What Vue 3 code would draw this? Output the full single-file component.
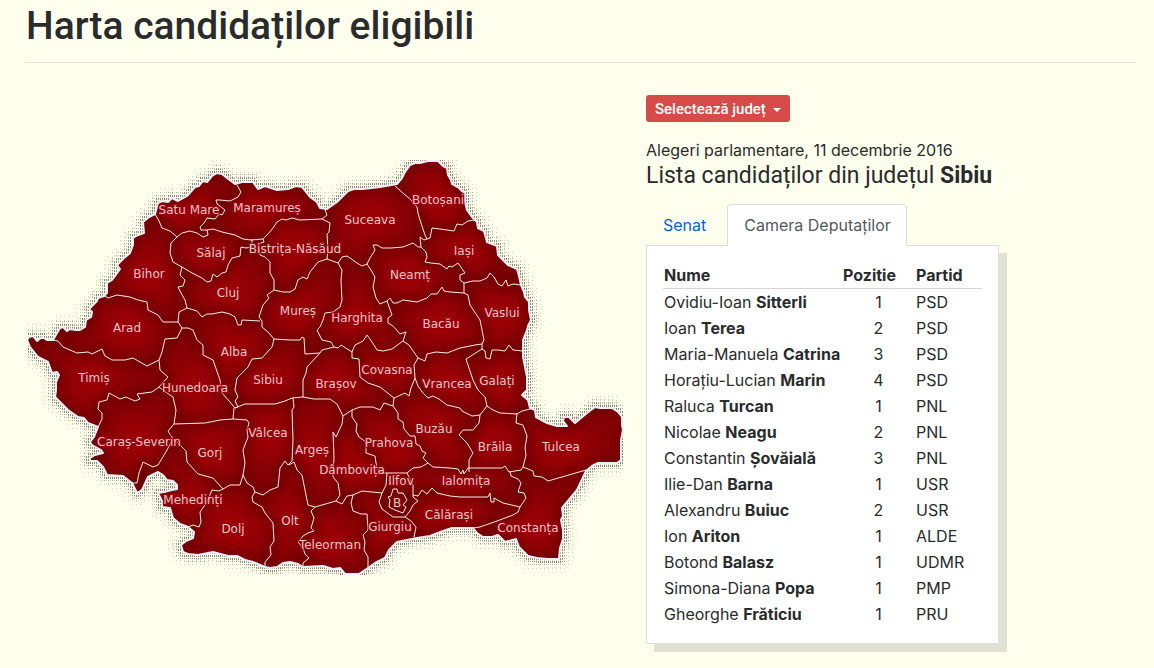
<script setup>
import { ref, computed } from 'vue'

const selected = ref('Sibiu')
const tab = ref('camera')

// candidates for each chamber
const lists = {
  senat: [],
  camera: [
    { first: 'Ovidiu-Ioan', last: 'Sitterli', pos: 1, party: 'PSD' },
    { first: 'Ioan', last: 'Terea', pos: 2, party: 'PSD' },
    { first: 'Maria-Manuela', last: 'Catrina', pos: 3, party: 'PSD' },
    { first: 'Horațiu-Lucian', last: 'Marin', pos: 4, party: 'PSD' },
    { first: 'Raluca', last: 'Turcan', pos: 1, party: 'PNL' },
    { first: 'Nicolae', last: 'Neagu', pos: 2, party: 'PNL' },
    { first: 'Constantin', last: 'Șovăială', pos: 3, party: 'PNL' },
    { first: 'Ilie-Dan', last: 'Barna', pos: 1, party: 'USR' },
    { first: 'Alexandru', last: 'Buiuc', pos: 2, party: 'USR' },
    { first: 'Ion', last: 'Ariton', pos: 1, party: 'ALDE' },
    { first: 'Botond', last: 'Balasz', pos: 1, party: 'UDMR' },
    { first: 'Simona-Diana', last: 'Popa', pos: 1, party: 'PMP' },
    { first: 'Gheorghe', last: 'Frăticiu', pos: 1, party: 'PRU' }
  ]
}
const candidates = computed(() => lists[tab.value])

// label position of each county on the map
const counties = [
  { name: 'Satu Mare', x: 189, y: 214 },
  { name: 'Maramureș', x: 267, y: 212 },
  { name: 'Suceava', x: 370, y: 224 },
  { name: 'Botoșani', x: 438, y: 204 },
  { name: 'Sălaj', x: 211, y: 257 },
  { name: 'Bistrița-Năsăud', x: 295, y: 253 },
  { name: 'Iași', x: 464, y: 255 },
  { name: 'Neamț', x: 410, y: 279 },
  { name: 'Bihor', x: 149, y: 278 },
  { name: 'Cluj', x: 228, y: 297 },
  { name: 'Mureș', x: 298, y: 315 },
  { name: 'Harghita', x: 357, y: 322 },
  { name: 'Bacău', x: 441, y: 328 },
  { name: 'Vaslui', x: 502, y: 317 },
  { name: 'Arad', x: 127, y: 332 },
  { name: 'Alba', x: 234, y: 356 },
  { name: 'Timiș', x: 94, y: 382 },
  { name: 'Hunedoara', x: 195, y: 392 },
  { name: 'Sibiu', x: 268, y: 384 },
  { name: 'Brașov', x: 336, y: 388 },
  { name: 'Covasna', x: 387, y: 374 },
  { name: 'Vrancea', x: 447, y: 388 },
  { name: 'Galați', x: 497, y: 385 },
  { name: 'Caraș-Severin', x: 139, y: 446 },
  { name: 'Gorj', x: 210, y: 457 },
  { name: 'Vâlcea', x: 268, y: 437 },
  { name: 'Argeș', x: 312, y: 454 },
  { name: 'Prahova', x: 389, y: 447 },
  { name: 'Buzău', x: 434, y: 433 },
  { name: 'Brăila', x: 495, y: 451 },
  { name: 'Tulcea', x: 561, y: 451 },
  { name: 'Mehedinți', x: 193, y: 504 },
  { name: 'Dolj', x: 233, y: 533 },
  { name: 'Olt', x: 290, y: 525 },
  { name: 'Dâmbovița', x: 352, y: 474 },
  { name: 'Ilfov', x: 401, y: 485 },
  { name: 'B', x: 397, y: 507 },
  { name: 'Ialomița', x: 466, y: 485 },
  { name: 'Călărași', x: 449, y: 519 },
  { name: 'Giurgiu', x: 390, y: 531 },
  { name: 'Teleorman', x: 330, y: 549 },
  { name: 'Constanța', x: 528, y: 532 }
]

const outline = 'M27 340L29 337L33 336L37 341L42 337L47 340L53 340L57 333L60 328L63 327L67 331L70 329L76 330L80 330L85 327L86 320L91 317L92 312L89 309L93 305L97 301L98 298L104 296L107 293L107 283L112 280L115 276L120 269L117 265L123 259L130 253L133 245L133 238L138 235L144 233L143 222L149 217L155 214L158 203L162 201L168 202L172 198L178 201L187 196L195 187L199 186L203 181L207 182L212 176L217 173L222 174L227 178L235 184L242 182L253 182L258 189L265 186L277 190L288 189L296 186L302 187L310 197L317 202L320 208L327 209L337 202L348 191L354 189L363 189L380 187L397 184L402 178L405 172L410 165L415 163L420 163L428 161L438 161L443 166L447 168L448 175L451 180L452 184L459 188L465 194L465 202L467 210L472 217L477 222L478 228L484 231L487 242L497 246L498 255L508 265L517 269L519 276L521 285L524 292L525 297L529 302L529 310L531 320L528 326L527 330L523 340L523 357L527 377L527 390L522 395L528 400L530 408L535 410L536 417L547 423L557 426L567 426L563 421L564 417L569 417L575 423L587 413L595 407L600 408L607 408L612 408L618 412L622 417L622 425L623 430L621 440L621 460L617 463L598 463L592 466L586 471L577 490L562 508L563 516L561 520L563 530L563 539L560 548L559 559L547 559L537 558L528 556L519 547L516 539L505 542L498 535L492 537L483 537L477 533L473 528L452 528L443 531L430 536L417 538L397 542L389 550L385 558L375 563L368 568L359 574L345 574L340 568L333 569L323 566L303 567L298 564L290 562L283 563L277 567L270 568L265 567L253 562L245 560L237 556L228 556L213 552L198 555L188 554L183 552L181 545L186 541L193 538L194 532L188 527L180 524L173 518L170 508L162 507L162 501L158 493L164 492L172 490L177 489L177 485L173 481L167 480L163 475L158 472L148 477L142 490L137 493L132 483L123 476L107 475L103 467L97 461L90 461L90 458L95 455L103 453L101 450L92 445L90 442L94 437L98 427L88 423L84 418L78 417L68 410L60 402L55 397L56 390L56 382L59 375L57 372L52 373L48 362L38 357L30 347Z'

const borders = [
  'M155 214L159 221L162 228L170 231L177 237L171 243L170 253L173 262L182 267',
  'M177 237L182 233L190 231L197 233L203 237L208 235L207 230L213 229L222 232L235 235L243 239L251 240L263 239',
  'M207 230L201 230L200 227L204 223L207 218L215 219L219 214L222 215L225 210L217 204L216 200L220 200L230 201L238 197L241 192L237 185',
  'M182 267L192 273L202 278L207 282L211 281L213 274L217 277L222 273L226 272L228 265L232 258L240 256L241 247L246 248L252 247L252 239',
  'M182 267L180 275L185 280L183 286L178 287L181 293L185 300L187 308',
  'M263 239L269 233L273 228L277 222L282 219L286 220L292 218L300 220L322 219L327 215L325 210L327 209',
  'M322 219L330 223L329 232L327 234L328 250L327 259',
  'M263 239L264 242L258 244L260 255L265 257L270 262L270 273L274 280L274 290',
  'M274 290L283 292L290 292L295 289L298 280L303 277L307 279L310 272L318 262L327 259L338 263L342 257L347 256L350 258L357 263L362 266L367 264L370 258L375 250L373 245L377 245L382 248L391 248L403 247L413 243L418 247L421 247L426 252L427 257L425 262L431 263L440 264L447 269L449 266L452 267L458 263L465 273L460 275L460 280L464 283L464 293',
  'M395 186L403 193L410 199L417 207L418 213L420 220L425 235L427 239L430 238L432 228L440 229L454 231L457 224L462 225L468 221L475 220',
  'M421 247L420 237L424 240L427 239',
  'M464 283L473 281L480 281L487 278L490 273L494 277L498 284L502 286L506 280L508 286L513 284L521 285',
  'M464 293L450 292L444 291L442 287L437 294L431 294L427 298L417 302L410 301L403 300L397 303L393 303L390 298L387 301L380 304L376 298L373 287L375 277L371 270L367 264',
  'M338 263L342 270L341 280L342 300L340 307L333 312L325 313L323 320L320 327L317 330L322 340L331 342L334 347L322 350L320 353L305 354L304 338L302 337L300 340L290 340L274 339L268 332L262 327L262 321L259 317L263 305L269 298L267 295L274 290',
  'M187 308L197 311L202 317L207 314L212 314L222 312L230 314L235 317L238 325L241 325L242 320L260 321',
  'M187 308L179 312L178 322L182 328L188 328L193 330L197 340L203 345L203 355L213 360L220 380L222 393L230 402L235 408L238 407',
  'M274 339L272 347L262 358L252 359L248 367L237 378L235 390L238 397L235 401L238 407',
  'M235 408L245 404L275 404L285 401L292 398L303 397L314 399L330 399L337 404L343 416',
  'M320 353L307 367L306 373L303 380L303 397',
  'M334 347L338 348L341 345L352 352L355 345L363 341L367 335L372 342L377 350L383 351L392 349L403 341L406 332L400 334L393 326L388 323L388 318L392 315L387 301',
  'M352 352L352 358L359 359L360 377L368 383L380 387L394 398',
  'M403 341L409 345L418 358L414 365L415 378L411 388L409 396L405 393L394 398L393 406L384 403L380 410L373 407L360 407L352 410L343 416',
  'M418 358L425 361L427 354L436 352L447 353L460 348L475 345L482 344L484 340L480 320L470 305L468 295L464 293',
  'M482 344L482 349L485 351L486 358L490 359L492 350L498 350L505 351L509 345L513 350L523 351',
  'M482 349L466 359L473 380L478 390L485 397L487 406',
  'M415 378L418 386L423 393L428 398L433 396L439 399L447 405L460 408L462 411L472 416L480 415L487 406',
  'M487 406L493 410L500 413L517 414L522 411L530 409',
  'M480 415L479 423L473 430L463 430L459 435L467 443L473 453L469 460L469 472',
  'M517 413L516 423L523 425L527 436L525 448L526 455L523 467',
  'M407 473L413 468L421 467L428 463L433 467L450 468L458 469L461 474L463 470L464 474L468 468L502 468L505 466L509 472L521 470L523 467L533 471L534 476L542 477L548 481L586 470',
  'M510 471L511 476L518 479L521 483L518 492L524 493L526 498L520 507L518 512L513 515L505 518L497 521L480 527L473 528',
  'M413 495L418 496L422 490L427 494L432 488L437 493L450 496L460 497L488 497L490 493L491 502L494 502L494 498L503 503L520 507',
  'M393 406L398 413L398 419L403 422L404 429L410 436L415 436L416 444L420 446L422 451L426 453L423 458L428 463',
  'M352 410L352 417L357 424L356 431L359 437L366 442L366 453L375 456L376 463L378 470L382 473L407 473',
  'M343 416L342 424L336 437L333 432L334 457L333 477L338 483L340 495L336 501L342 504L347 496L353 495L362 491L382 493L386 485L387 473',
  'M293 398L294 407L292 410L293 440L292 461L288 465L285 461L280 468L278 487L270 490L263 495L255 492L253 487L247 483L243 475',
  'M289 465L294 462L297 470L302 475L305 490L308 505L315 507L336 501',
  'M182 328L177 338L165 339L162 352L159 360L160 370L168 377L159 387L167 393L173 397L176 410L174 424L205 423L220 420L233 419L234 408',
  'M233 419L247 420L249 423L247 430L248 437L243 450L245 463L243 475L240 485L230 485L223 489L219 491L212 490L207 502L200 512L201 522L199 527L193 525L188 527',
  'M174 424L168 431L173 439L180 445L186 451L187 462L198 474L213 478L223 489',
  'M173 439L167 450L158 465L153 467L143 462L139 473L137 483L132 483',
  'M255 492L252 497L253 502L262 507L265 513L273 523L274 541L270 547L271 555L265 562L265 567',
  'M315 507L311 511L314 518L311 528L314 531L308 533L303 536L298 542L303 548L305 554L309 558L303 563L303 567',
  'M353 495L351 503L353 511L361 514L367 514L368 530L363 535L365 542L364 550L368 557L368 568',
  'M382 493L379 502L382 509L393 517L405 517L410 511L413 505L418 501L413 497L413 485L407 473',
  'M405 517L411 521L416 527L414 537',
  'M393 489L391 496L388 497L390 500L389 507L395 510L403 513L406 507L403 505L407 500L403 493L398 493L397 489Z',
  'M105 296L108 298L117 295L130 297L138 300L147 302L148 310L158 315L163 322L178 322',
  'M53 340L58 341L63 347L70 350L77 353L88 352L92 354L102 349L105 356L112 360L125 360L133 358L147 366L159 360',
  'M159 387L152 392L137 394L140 399L135 401L126 397L120 399L109 393L107 400L99 402L98 409L102 413L102 419L98 427'
]

const pickCounty = (e) => {
  selected.value = e.target.value
  e.target.value = ''
}
</script>

<template>
  <main>
    <h1>Harta candidaților eligibili</h1>
    <div class="row">
      <div class="map">
        <svg viewBox="26 140 620 450" role="img" aria-label="Harta județelor">
          <defs>
            <radialGradient id="glow">
              <stop offset="0" stop-color="#a00004" />
              <stop offset="1" stop-color="#a00004" stop-opacity="0" />
            </radialGradient>
            <pattern id="sparse" width="4" height="4" patternUnits="userSpaceOnUse">
              <rect width="1" height="1" fill="#d2d2c2" />
            </pattern>
            <pattern id="medium" width="4" height="3" patternUnits="userSpaceOnUse">
              <rect width="1" height="1" fill="#a4a496" />
              <rect x="2" width="1" height="1" fill="#c8c8b8" />
            </pattern>
            <pattern id="dense" width="2" height="3" patternUnits="userSpaceOnUse">
              <rect width="1" height="2" fill="#88887a" />
            </pattern>
            <filter id="soft" x="-5%" y="-5%" width="110%" height="110%">
              <feGaussianBlur stdDeviation="6" />
            </filter>
            <clipPath id="country"><path :d="outline" /></clipPath>
            <clipPath id="frame"><rect x="27" y="160" width="597" height="415" /></clipPath>
          </defs>
          <!-- dotted shadow around the country -->
          <g fill="none" stroke-linejoin="round" clip-path="url(#frame)">
            <path :d="outline" stroke="url(#sparse)" stroke-width="27" />
            <path :d="outline" stroke="url(#medium)" stroke-width="17" />
            <path :d="outline" stroke="url(#dense)" stroke-width="9" />
          </g>
          <path :d="outline" fill="#860004" />
          <g clip-path="url(#country)">
            <circle v-for="c in counties" :key="c.name" :cx="c.x" :cy="c.y - 4" r="40" fill="url(#glow)" />
            <g class="shade" filter="url(#soft)">
              <path v-for="(d, i) in borders" :key="i" :d="d" />
              <path :d="outline" />
            </g>
          </g>
          <g class="lines">
            <path v-for="(d, i) in borders" :key="i" :d="d" />
          </g>
          <path class="edge" :d="outline" />
          <g class="names">
            <text v-for="c in counties" :key="c.name" :x="c.x" :y="c.y" @click="selected = c.name">{{ c.name }}</text>
          </g>
        </svg>
      </div>

      <div class="info">
        <div class="dropdown">
          <select aria-label="Selectează județ" @change="pickCounty">
            <option value="">Selectează județ</option>
            <option v-for="c in counties" :key="c.name" :value="c.name">{{ c.name }}</option>
          </select>
        </div>
        <p>Alegeri parlamentare, 11 decembrie 2016</p>
        <h2>Lista candidaților din județul <b>{{ selected }}</b></h2>
        <nav>
          <a href="#senat" :class="{ active: tab === 'senat' }" @click.prevent="tab = 'senat'">Senat</a>
          <a href="#camera" :class="{ active: tab === 'camera' }" @click.prevent="tab = 'camera'">Camera Deputaților</a>
        </nav>
        <div class="card">
          <table>
            <thead>
              <tr>
                <th>Nume</th>
                <th>Pozitie</th>
                <th>Partid</th>
              </tr>
            </thead>
            <tbody>
              <tr v-for="c in candidates" :key="c.last">
                <td>{{ c.first }} <b>{{ c.last }}</b></td>
                <td class="pos">{{ c.pos }}</td>
                <td>{{ c.party }}</td>
              </tr>
            </tbody>
          </table>
        </div>
      </div>
    </div>
  </main>
</template>

<style>
body {
  background-color: #ffffee;
}
</style>

<style scoped>
main {
  padding: 0 18px 16px 26px;
  font-family: Inter, Roboto, sans-serif;
  font-size: 16px;
  line-height: 24px;
  color: #292b2c;
}
h1,
h2 {
  font-family: Roboto, Inter, sans-serif;
}
h1 {
  margin: 0;
  padding: 4px 0 14px;
  border-bottom: 1px solid #e5e5d6;
  font-size: 39px;
  line-height: 44px;
  font-weight: 500;
}
.row {
  display: flex;
  align-items: flex-start;
}
.map {
  flex: 0 1 620px;
  min-width: 0;
  padding-top: 77px;
}
.map svg {
  display: block;
  width: 100%;
  overflow: visible;
}
.shade path {
  fill: none;
  stroke: #6c0002;
  stroke-width: 8px;
}
.lines path {
  fill: none;
  stroke: #ffecec;
  stroke-width: 1px;
  stroke-linejoin: round;
}
.edge {
  fill: none;
  stroke: #eeeef8;
  stroke-width: 2px;
  stroke-linejoin: round;
}
.names text {
  font-family: "DejaVu Sans", sans-serif;
  font-size: 12px;
  text-anchor: middle;
  fill: #ecc4c4;
  stroke: #96000a;
  stroke-opacity: 0.7;
  stroke-width: 3px;
  stroke-linejoin: round;
  paint-order: stroke;
  cursor: pointer;
}
.info {
  flex: none;
  padding-top: 32px;
}
.dropdown {
  position: relative;
  display: inline-block;
  height: 27px;
}
.dropdown::after {
  content: "";
  position: absolute;
  right: 9px;
  top: 13px;
  border: 4px solid transparent;
  border-top-color: white;
  border-bottom: 0;
  pointer-events: none;
}
select {
  appearance: none;
  display: block;
  width: 144px;
  height: 27px;
  padding: 0 9px;
  border: 0;
  border-radius: 3px;
  background-color: #d64a48;
  color: white;
  font-family: Roboto, Inter, sans-serif;
  font-size: 15px;
  font-weight: 500;
}
select option {
  background-color: white;
  color: #292b2c;
}
.info p {
  margin: 16px 0 0;
}
h2 {
  margin: 0 0 14px;
  font-size: 23px;
  line-height: 28px;
  font-weight: 400;
}
nav {
  display: flex;
  gap: 5px;
}
nav a {
  padding: 8px 15px 8px 16px;
  border: 1px solid transparent;
  border-bottom: 0;
  border-radius: 4px 4px 0 0;
  color: #0b5fd8;
  text-decoration: none;
}
nav a.active {
  position: relative;
  margin-bottom: -1px;
  padding-bottom: 9px;
  border-color: #dddddd;
  background-color: white;
  color: #55595c;
}
.card {
  width: fit-content;
  padding: 16px;
  border: 1px solid #dddddd;
  background-color: white;
  box-shadow: 8px 8px 0 #e2e2d4;
}
table {
  width: 319px;
  border-collapse: collapse;
  white-space: nowrap;
}
th,
td {
  padding: 1px 0 1px 1px;
  text-align: left;
}
th {
  border-bottom: 1px solid #d5d5d5;
}
th:first-child {
  width: 178px;
}
th:nth-child(2) {
  width: 72px;
}
td.pos {
  padding-left: 0;
  text-align: center;
}
</style>
